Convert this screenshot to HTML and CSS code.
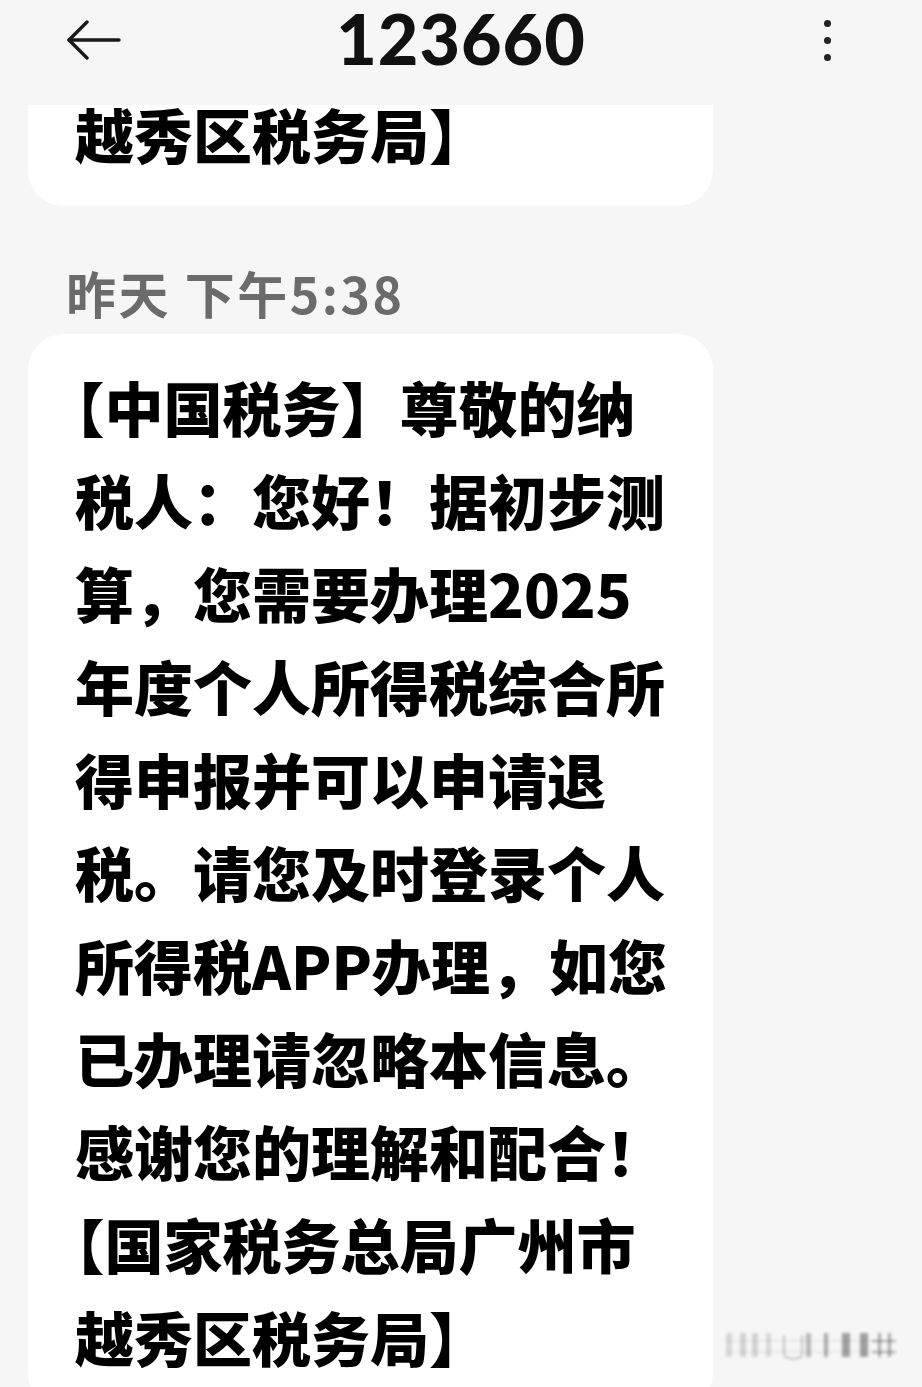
FILE: index.html
```html
<!DOCTYPE html>
<html lang="zh-CN">
<head>
  <meta charset="UTF-8">
  <meta name="viewport" content="width=device-width, initial-scale=1.0">
  <title>123660</title>
  <link rel="stylesheet" href="styles.css">
</head>
<body>
  <div class="screen">
    <header class="topbar">
      <button class="icon-btn back" aria-label="返回">
        <svg width="56" height="40" viewBox="0 0 56 40" fill="none" stroke="#1a1a1a" stroke-width="3.4" stroke-linecap="round" stroke-linejoin="round">
          <path d="M3 20 H53"/>
          <path d="M21 2 L3 20 L21 38"/>
        </svg>
      </button>
      <h1 class="title">123660</h1>
      <button class="icon-btn more" aria-label="更多">
        <span class="dot"></span><span class="dot"></span><span class="dot"></span>
      </button>
    </header>

    <main class="thread">
      <div class="bubble bubble-prev">
        <p>越秀区税务局】</p>
      </div>

      <div class="time">昨天 下午5:38</div>

      <div class="bubble">
        <p>【中国税务】尊敬的纳<br>税人：您好！据初步测<br>算，您需要办理2025<br>年度个人所得税综合所<br>得申报并可以申请退<br>税。请您及时登录个人<br>所得税APP办理，如您<br>已办理请忽略本信息。<br>感谢您的理解和配合！<br>【国家税务总局广州市<br>越秀区税务局】</p>
      </div>
    </main>

    <!-- faint watermark in the corner -->
    <svg class="watermark" width="180" height="40" viewBox="0 0 180 40">
      <defs>
        <filter id="soft"><feGaussianBlur stdDeviation="1.6"/></filter>
      </defs>
      <g filter="url(#soft)" fill="#000">
        <rect x="4" y="8" width="6" height="24" opacity="0.12"/>
        <rect x="18" y="8" width="6" height="24" opacity="0.14"/>
        <rect x="30" y="8" width="6" height="24" opacity="0.14"/>
        <rect x="44" y="8" width="5" height="24" opacity="0.12"/>
        <path d="M62 10 V28 Q62 34 72 34 Q80 34 80 28 V10" stroke="#000" stroke-width="1.6" fill="none" opacity="0.25"/>
        <rect x="84" y="8" width="5" height="24" opacity="0.25"/>
        <rect x="102" y="8" width="4" height="24" opacity="0.3"/>
        <rect x="120" y="8" width="8" height="24" opacity="0.35"/>
        <rect x="138" y="8" width="8" height="24" opacity="0.35"/>
        <rect x="156" y="8" width="3" height="24" opacity="0.3"/>
        <rect x="166" y="8" width="3" height="24" opacity="0.3"/>
        <rect x="150" y="15" width="24" height="2" opacity="0.3"/>
        <rect x="150" y="26" width="24" height="2" opacity="0.3"/>
        <rect x="4" y="15" width="150" height="1.5" opacity="0.08"/>
        <rect x="4" y="26" width="150" height="1.5" opacity="0.08"/>
      </g>
    </svg>
  </div>
</body>
</html>
```

FILE: styles.css
```css
/* Basic resets */
* {
  margin: 0;
  padding: 0;
  box-sizing: border-box;
}
html, body {
  height: 100%;
  background: #f6f6f6;
}
body {
  font-family: "Noto Sans CJK SC", "Noto Sans", sans-serif;
  color: #000;
}
.screen {
  position: relative;
  width: 922px;
  height: 1387px;
  overflow: hidden;
  display: flex;
  flex-direction: column;
}

/* Top bar */
.topbar {
  height: 105px;
  flex-shrink: 0;
  display: grid;
  grid-template-columns: 1fr auto 1fr;
  align-items: start;
  background: #f6f6f6;
  position: relative;
  z-index: 1;
}
.icon-btn {
  border: none;
  background: none;
  height: 80px;
  display: flex;
  align-items: center;
  cursor: pointer;
}
.back {
  justify-self: start;
  padding-left: 66px;
}
.title {
  font-family: "Lato", "Noto Sans", sans-serif;
  font-weight: 900;
  font-size: 70px;
  line-height: 90px;
  margin-top: -7px;
  letter-spacing: 1px;
  color: #111;
}
.more {
  justify-self: end;
  flex-direction: column;
  justify-content: center;
  gap: 10px;
  padding-right: 91px;
}
.dot {
  width: 7px;
  height: 7px;
  border-radius: 50%;
  background: #222;
}

/* Message thread */
.thread {
  flex: 1;
  overflow: hidden;
  padding: 0 28px;
}
.bubble {
  width: 685px;
  background: #fff;
  border-radius: 36px;
  padding: 26px 0 26px 47px;
}
.bubble p {
  font-size: 59px;
  font-weight: 900;
  line-height: 93px;
  white-space: nowrap;
  text-spacing-trim: trim-start;
}
.bubble-prev {
  margin-top: -44px;
}
.time {
  margin: 56px 0 12px 38px;
  font-size: 50px;
  line-height: 60px;
  font-weight: 700;
  letter-spacing: 2.5px;
  color: #6b6b6b;
}

.watermark {
  position: absolute;
  right: 20px;
  bottom: 22px;
}
```
